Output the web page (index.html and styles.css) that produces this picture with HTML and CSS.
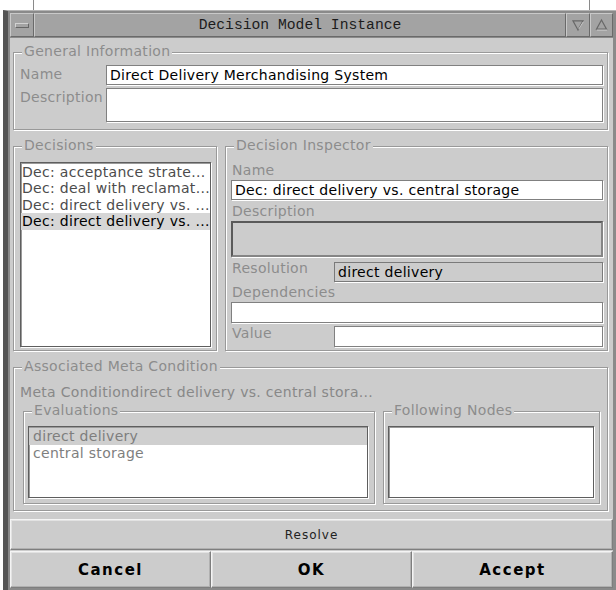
FILE: index.html
```html
<!DOCTYPE html>
<html lang="en">
<head>
<meta charset="utf-8">
<title>Decision Model Instance</title>
<link rel="stylesheet" href="styles.css">
</head>
<body>
<span class="mark mark-left"></span>
<span class="mark mark-right"></span>
<div class="window">
  <div class="titlebar">
    <div class="tb-btn tb-menu"><span class="menu-bar"></span></div>
    <div class="tb-title">Decision Model Instance</div>
    <div class="tb-btn tb-small">
      <svg width="24" height="24" viewBox="0 0 24 24">
        <polygon points="6.5,7.5 17.5,7.5 12,17.5" fill="none" stroke="#686868" stroke-width="1.3"/>
        <line x1="12.8" y1="16.5" x2="17.8" y2="8.5" stroke="#cfcfcf" stroke-width="1"/>
      </svg>
    </div>
    <div class="tb-btn tb-small">
      <svg width="23" height="24" viewBox="0 0 23 24">
        <polygon points="11.5,6.5 17,16.5 6,16.5" fill="none" stroke="#686868" stroke-width="1.3"/>
        <line x1="6.5" y1="17.6" x2="17.5" y2="17.6" stroke="#cfcfcf" stroke-width="1"/>
      </svg>
    </div>
  </div>

  <div class="client">
    <section class="group general">
      <span class="group-title">General Information</span>
      <div class="form-grid">
        <span class="lbl">Name</span>
        <div class="field">Direct Delivery Merchandising System</div>
        <span class="lbl">Description</span>
        <div class="field area"></div>
      </div>
    </section>

    <div class="mid-row">
      <section class="group decisions">
        <span class="group-title">Decisions</span>
        <ul class="list">
          <li>Dec: acceptance strate...</li>
          <li>Dec: deal with reclamat...</li>
          <li>Dec: direct delivery vs. ...</li>
          <li class="selected">Dec: direct delivery vs. ...</li>
        </ul>
      </section>

      <section class="group inspector">
        <span class="group-title">Decision Inspector</span>
        <span class="lbl lbl-block">Name</span>
        <div class="field name-field">Dec: direct delivery vs. central storage</div>
        <span class="lbl lbl-block">Description</span>
        <div class="field disabled-area"></div>
        <div class="inline-row resolution-row">
          <span class="lbl lbl-inline">Resolution</span>
          <div class="field readonly">direct delivery</div>
        </div>
        <span class="lbl lbl-block">Dependencies</span>
        <div class="field dep-field"></div>
        <div class="inline-row value-row">
          <span class="lbl lbl-inline">Value</span>
          <div class="field"></div>
        </div>
      </section>
    </div>

    <section class="group meta">
      <span class="group-title">Associated Meta Condition</span>
      <div class="meta-text">Meta Conditiondirect delivery vs. central stora...</div>
      <div class="meta-row">
        <section class="group evaluations">
          <span class="group-title">Evaluations</span>
          <ul class="list eval-list">
            <li class="selected">direct delivery</li>
            <li>central storage</li>
          </ul>
        </section>
        <section class="group following">
          <span class="group-title">Following Nodes</span>
          <ul class="list"></ul>
        </section>
      </div>
    </section>

    <button class="btn resolve">Resolve</button>
    <div class="btn-row">
      <button class="btn big">Cancel</button>
      <button class="btn big">OK</button>
      <button class="btn big">Accept</button>
    </div>
  </div>
</div>
</body>
</html>
```

FILE: styles.css
```css
* { box-sizing: border-box; }

html, body {
  margin: 0;
  padding: 0;
  width: 616px;
  height: 590px;
  overflow: hidden;
  background: #ffffff;
}

body {
  position: relative;
  font-family: "DejaVu Sans", "Liberation Sans", sans-serif;
  font-size: 14px;
  letter-spacing: 0.3px;
  color: #000;
}

/* resize-corner ticks of the window manager frame */
.mark {
  position: absolute;
  top: 0;
  width: 1px;
  height: 10px;
  background: #8a8a8a;
}
.mark-left { left: 33px; }
.mark-right { left: 589px; }

/* ---------- window frame ---------- */
.window {
  margin: 10px 0 0 3px;
  width: 613px;
  height: 580px;
  background: #8a8a8a;
  border-top: 1px solid #b4b4b4;
  border-left: 5px solid #555555;
  padding: 2px 3px 2px 2px;
  display: flex;
  flex-direction: column;
}

.titlebar {
  height: 24px;
  display: flex;
  flex: none;
}

.tb-btn,
.tb-title {
  background: #a3a3a3;
  border: 1px solid;
  border-color: #c9c9c9 #6a6a6a #6a6a6a #c9c9c9;
}

.tb-menu {
  width: 24px;
  display: flex;
  align-items: center;
  justify-content: center;
}

.menu-bar {
  width: 14px;
  height: 5px;
  border: 1px solid;
  border-color: #d2d2d2 #666 #666 #d2d2d2;
  background: #a3a3a3;
}

.tb-title {
  flex: 1;
  text-align: center;
  font-family: "Liberation Mono", "DejaVu Sans Mono", monospace;
  font-size: 14.7px;
  letter-spacing: 0;
  line-height: 22px;
  color: #1c1c1c;
}

.tb-small {
  width: 24px;
  display: flex;
  align-items: center;
  justify-content: center;
  overflow: hidden;
}
.tb-small:last-child { width: 23px; }

.client {
  flex: 1;
  margin-top: 1px;
  background: #cccccc;
  display: flex;
  flex-direction: column;
}

/* ---------- etched, titled group boxes ---------- */
.group {
  position: relative;
  border: 1px solid #999999;
  box-shadow: inset 1px 1px 0 #ffffff, 1px 1px 0 #ffffff;
}

.group-title {
  position: absolute;
  top: -10px;
  left: 8px;
  padding: 0 2px;
  background: #cccccc;
  line-height: 16px;
  color: #8c8c8c;
  white-space: nowrap;
}

.lbl {
  color: #8c8c8c;
  line-height: 18px;
  white-space: nowrap;
}

/* ---------- text fields ---------- */
.field {
  background: #ffffff;
  border: 1px solid #808080;
  box-shadow: 1px 1px 0 #ffffff;
  padding: 0 3px;
  line-height: 18px;
  white-space: nowrap;
  overflow: hidden;
  color: #000;
}

/* ---------- general information ---------- */
.general {
  margin: 14px 5px 0 3px;
  height: 78px;
  padding: 12px 4px 0 6px;
}

.form-grid {
  display: grid;
  grid-template-columns: 86px 1fr;
  grid-template-rows: 20px 34px;
  row-gap: 3px;
}

.form-grid .lbl { align-self: start; }

/* ---------- decisions + inspector ---------- */
.mid-row {
  margin: 16px 5px 0 3px;
  height: 205px;
  display: flex;
  gap: 8px;
}

.decisions {
  width: 204px;
  padding: 15px 5px 3px 6px;
  display: flex;
}

.list {
  list-style: none;
  margin: 0;
  padding: 1px 0 0 0;
  flex: 1;
  background: #ffffff;
  border: 1px solid #5e5e5e;
  box-shadow: inset 1px 1px 0 #9a9a9a, 1px 1px 0 #ffffff;
}

.list li {
  line-height: 16.4px;
  padding-left: 1px;
  color: #4c4c4c;
  white-space: nowrap;
}

.list li.selected {
  background: #d6d6d6;
  color: #000;
}

.inspector {
  flex: 1;
  padding: 14px 4px 3px 5px;
  display: flex;
  flex-direction: column;
}

.lbl-block { display: block; padding-left: 1px; }

.name-field { height: 20px; margin-top: 1px; }

.inspector .lbl-block + .disabled-area { margin-top: 1px; }
.inspector .name-field + .lbl-block { margin-top: 2px; }

.disabled-area {
  height: 36px;
  background: #cccccc;
  border: 2px solid #858585;
  border-top-color: #5a5a5a;
  border-left-color: #5a5a5a;
}

.inline-row {
  display: flex;
  align-items: flex-start;
}

.lbl-inline {
  width: 103px;
  flex: none;
  line-height: 13px;
  padding-left: 1px;
}

.inline-row .field { flex: 1; }

.resolution-row { margin-top: 5px; height: 20px; }
.resolution-row .field { height: 20px; }

.readonly {
  background: #cccccc;
  border-color: #7a7a7a;
}

.resolution-row + .lbl-block { margin-top: 1px; }

.dep-field { height: 21px; margin-top: 1px; }

.value-row { margin-top: 3px; height: 21px; }
.value-row .lbl-inline { line-height: 14px; }
.value-row .field { height: 21px; }

/* ---------- associated meta condition ---------- */
.meta {
  margin: 16px 5px 0 3px;
  height: 144px;
  padding: 15px 7px 6px 9px;
  display: flex;
  flex-direction: column;
}

.meta-text {
  line-height: 18px;
  color: #888888;
  margin-left: -3px;
  white-space: nowrap;
}

.meta-row {
  margin-top: 10px;
  flex: 1;
  display: flex;
  gap: 8px;
}

.evaluations {
  width: 352px;
  padding: 14px 6px 5px 4px;
  display: flex;
}

.following {
  flex: 1;
  padding: 14px 5px 5px 4px;
  display: flex;
}

.eval-list li {
  line-height: 17px;
  padding-left: 4px;
  color: #7e7e7e;
}
.eval-list li.selected {
  background: #cfcfcf;
  color: #7e7e7e;
}

/* ---------- buttons ---------- */
.btn {
  font-family: "DejaVu Sans", "Liberation Sans", sans-serif;
  background: #cccccc;
  border: 1px solid;
  border-color: #f4f4f4 #7e7e7e #7e7e7e #f4f4f4;
  box-shadow: inset -1px -1px 0 #b0b0b0, inset 1px 1px 0 #e2e2e2;
  margin: 0;
  padding: 0;
  cursor: default;
}

.resolve {
  margin-top: 8px;
  height: 31px;
  width: 100%;
  font-size: 12px;
  letter-spacing: 1px;
  color: #222222;
}

.btn-row {
  margin-top: 1px;
  height: 37px;
  display: flex;
}

.big {
  flex: 1;
  font-size: 15px;
  font-weight: bold;
  letter-spacing: 1.5px;
  color: #000;
}
```
